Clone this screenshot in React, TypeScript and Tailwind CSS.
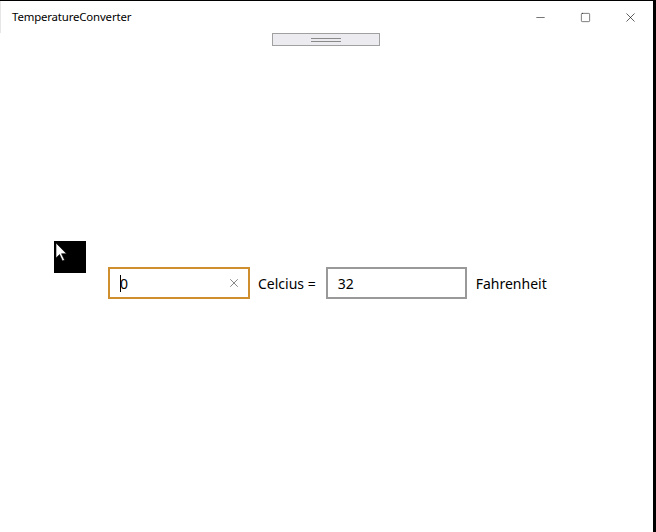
import { X, Minus, Square } from "lucide-react"

export default function App() {
    return (
        <div className="w-[656px] h-[532px] bg-white flex border-t border-black overflow-hidden" style={{ fontFamily: '"Noto Sans", "Open Sans", sans-serif' }}>
            <div className="flex-1 flex flex-col">
                {/* 타이틀바 */}
                <div className="h-[32px] flex items-center shrink-0 relative border-l border-l-[#e6e6e6]">
                    <span className="pl-[11px] text-[11.4px] text-black tracking-[-0.15px]">TemperatureConverter</span>
                    <div className="ml-auto flex items-center h-full">
                        <div className="w-[45px] h-full flex items-center justify-center">
                            <Minus size={13} strokeWidth={1} color="#000" />
                        </div>
                        <div className="w-[45px] h-full flex items-center justify-center">
                            <Square size={11} strokeWidth={1.1} color="#000" />
                        </div>
                        <div className="w-[45px] h-full flex items-center justify-center">
                            <X size={15} strokeWidth={1} color="#000" />
                        </div>
                    </div>
                    {/* 드래그 핸들 */}
                    <div className="absolute left-[271px] top-[32px] w-[108px] h-[13px] bg-[#ebebf0] border border-[#a0a0a0] flex flex-col items-center justify-center gap-[2px]">
                        <div className="w-[30px] h-px bg-[#8a8a8a]" />
                        <div className="w-[30px] h-px bg-[#8a8a8a]" />
                    </div>
                </div>

                <div className="flex-1 relative">
                    {/* 커서 박스 */}
                    <div className="absolute left-[54px] top-[208px] w-[32px] h-[32px] bg-black">
                        <svg width="32" height="32" viewBox="0 0 32 32">
                            <path d="M2 2 L2 17 L5.5 13.5 L8.5 20 L10.5 19 L7.5 12.7 L12.5 12.7 Z" fill="white" stroke="black" strokeWidth="0.6" />
                        </svg>
                    </div>

                    <div className="flex items-center pl-[108px] pt-[234px] text-[14px] text-black">
                        <div className="w-[142px] h-[32px] border-2 border-[#cf8f2e] flex items-center px-[10px]">
                            <div className="w-px h-[17px] bg-black" />
                            <span className="-ml-[1px]">0</span>
                            <X size={14} strokeWidth={1.2} color="#555" className="ml-auto -mr-[3px]" />
                        </div>
                        <span className="ml-[8px]">Celcius =</span>
                        <div className="ml-[10px] w-[141px] h-[32px] border-2 border-[#999999] flex items-center px-[10px]">
                            <span>32</span>
                        </div>
                        <span className="ml-[9px]">Fahrenheit</span>
                    </div>
                </div>
            </div>
            <div className="w-[3px] bg-black" />
        </div>
    )
}
